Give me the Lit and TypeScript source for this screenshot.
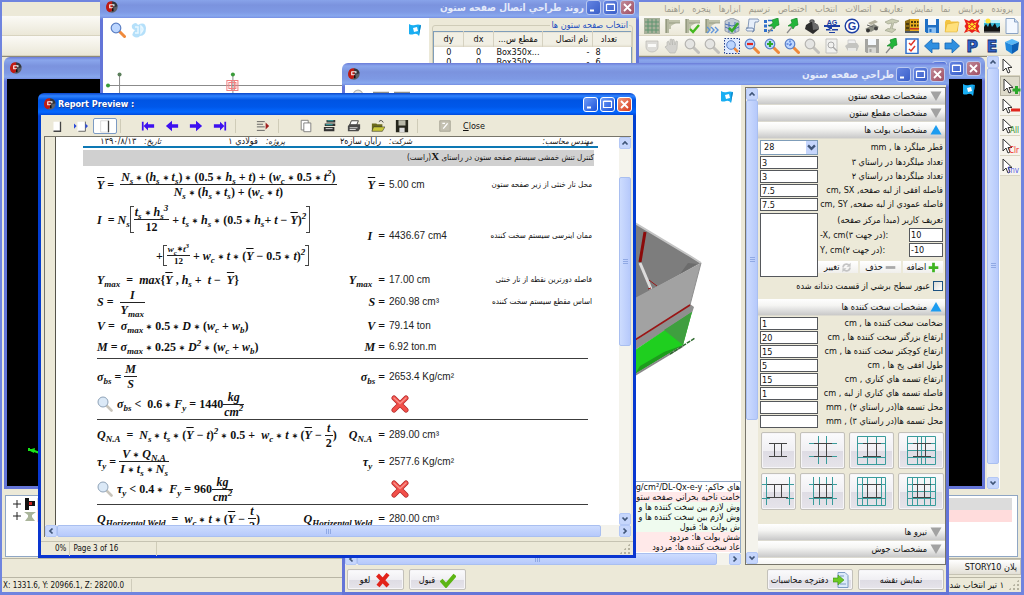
import { LitElement, html, svg, css, nothing } from "lit";
import { customElement, property } from "lit/decorators.js";
import { classMap } from "lit/directives/class-map.js";

/* ---------- icons ---------- */

const icon = (body: unknown, cls = "", box = "0 0 16 16") =>
  html`<svg class="icon ${cls}" viewBox=${box} aria-hidden="true">${body}</svg>`;

const lens = (glass: string, rim: string, handle: string, mark: unknown = nothing) =>
  icon(svg`<path d="M9.500 9.500 14.500 14.500" stroke=${handle} stroke-width="3" stroke-linecap="round"/>
    <circle cx="6" cy="6" r="4.800" fill=${glass} stroke=${rim} stroke-width="1.200"/>${mark}`);

const blueLens = (mark: unknown = nothing) => lens("#bcd6ff", "#5b7fc4", "#f08a3c", mark);
const greyLens = () => lens("#e4e4e2", "#b5b4b0", "#c2c1bd");

const beam = (mark: unknown) =>
  icon(svg`<path d="M1 1h4v14H1z" fill="#b4b8a0"/><path d="M5 2h11v3H5zM5 5h7L7 8v3H5z" fill="#bfc2ab"/>
    <path d="M2.500 1v14M5 5h11" stroke="#888c74" stroke-width=".7"/>${mark}`);

const pin = (x = 0) => svg`<g transform="translate(${x} 0)"><path d="M7 2 13 0 14 7 11 8 9 11 7 8 4 8 8 5z" fill="#23b53a" stroke="#0d7d20" stroke-width=".6"/><path d="M8 9 3 15" stroke="#888" stroke-width="1.200"/></g>`;

const floppy = (a: string, b: string) =>
  icon(svg`<path d="M1 1h14v14H2.500L1 13.500z" fill=${a}/><path d="M4 1h8v6H4z" fill="#f4f8fc"/><path d="M4 9.500h8V15H4z" fill=${b}/><path d="M5.500 11h2v3h-2z" fill=${a}/>`);

const arrow = (flip: boolean) =>
  icon(svg`<path transform=${flip ? "matrix(-1 0 0 1 16 0)" : ""} d="M1 5h7V1l7.500 7L8 15v-4H1z" fill="#2f8fe0" stroke="#1566b4" stroke-width=".8"/>`);

const letter = (t: string) =>
  icon(svg`<text x="8" y="14" text-anchor="middle" font-family="DejaVu Sans" font-weight="bold" font-size="16" fill="#2f62c8" stroke="#142f6e" stroke-width=".8">${t}</text>`);

const topTools: [string, unknown][] = [
  ["جدید", icon(svg`<path d="M2 .5h8.500L14 4v11.500H2z" fill="#f3f8ff" stroke="#8aa3c4"/><path d="M10.500.5V4H14" fill="#cfdff5" stroke="#8aa3c4"/>`)],
  ["مدل", icon(svg`<path d="M0 2h16v13H0z" fill="#37b7d8"/><path d="M0 2h16v3H0z" fill="#bff0f7"/><path d="M0 15V9l2-3 2 3 2-5 2 5 3-4 2 5 3-2v7z" fill="#111"/><circle cx="4" cy="3" r="2.500" fill="#ffe23a"/><path d="M0 13.500h16V15H0z" fill="#7c7c7c"/>`)],
  ["شبکه", icon(svg`<path d="M0 1 5 3 8 1l3 2 5-2-2 5 1.500 2L14 11l2 4-5-2-3 2-3-2-5 2 2-4-1.500-3L2 6z" fill="#e9221c"/><path d="M3 4 7 6 8 4l1 2 4-2-2 3 1 1-1 2 2 3-4-2-1 1-1-1-4 2 2-3-1-2 1-1z" fill="#ffe92b"/><path d="M5 6 11 11M11 6 5 11" stroke="#e9221c"/>`)],
  ["باز کردن", icon(svg`<path d="M1 4 2 2h4l1 1.500h7V13H1z" fill="#f3c443"/><path d="M3 6l12-2-2 10H1z" fill="#ffe07a" stroke="#dba92a" stroke-width=".5"/>`)],
  ["ذخیره", floppy("#1f6fc4", "#8dc1f2")],
  ["ساختمان", icon(svg`<path d="M1 3 6 1v14H1z" fill="#8a6b14"/><path d="M6 1h9v14H6z" fill="#e6ad20"/><path d="M7 3h2v2H7zM10 3h2v2h-2zM13 3h1.500v2H13zM7 6.500h2v2H7zM10 6.500h2v2h-2zM13 6.500h1.500v2H13zM2 5h3v2H2zM2 9h3v2H2z" fill="#4b3a10"/><path d="M6 10h9v1.500H6z" fill="#c43222"/><path d="M1 13h14v2H1z" fill="#4d5660"/>`)],
  ["مقطع", icon(svg`<path d="M1 4 8 1l7 2-3 2-2-.5-2 6 4 1-4 3-7-2 3-2 2 .5 2-6-4 1z" fill="#c9ccb4" stroke="#959983" stroke-width=".6"/>`)],
  ["بار", icon(svg`<path d="M1 11 10 6l5 3-8 5z" fill="#8d8e84"/><path d="M4 5 11 2l3 2-7 3z" fill="#b3b09d"/><path d="M3 7 9 9" stroke="#666"/><circle cx="4" cy="12.500" r="2" fill="#333"/><circle cx="12" cy="10.500" r="2" fill="#444"/>`)],
  ["G", icon(svg`<circle cx="8" cy="8" r="6.800" fill="#fff" stroke="#1c3fa4" stroke-width="1.400"/><text x="8" y="12" text-anchor="middle" font-family="Liberation Sans" font-weight="bold" font-size="11" fill="#1c3fa4">G</text>`)],
  ["AG", icon(svg`<text x="8" y="6.500" text-anchor="middle" font-family="Liberation Sans" font-weight="bold" font-size="7" fill="#1c3fa4">AG</text><path d="M0 7h16v2H0zM2 11h12v1.500H2zM5 14h6v1H5zM3 9 8 13 8 9z" fill="#1c3fa4"/>`)],
  ["وزن", icon(svg`<path d="M6 4a2 2 0 0 1 4 0" stroke="#555" stroke-width="1.500"/><path d="M8 3 14 7l1 4-6 5-8-5 1-4z" fill="#2d2d2d"/><path d="M8 3 14 7l1 4-6 1z" fill="#6c6c6c"/>`)],
  ["گره", icon(pin())],
  ["لیست", icon(svg`<path d="M0 2h3v3H0zM0 6.500h3v3H0zM0 11h3v3H0z" fill="#2f6fcb"/><path d="M4 2.500h4M4 7.500h4M4 12.500h5" stroke="#2f6fcb" stroke-width="1.500"/>${pin(1)}`)],
  ["گزارش", icon(svg`<path d="M5 1h9a2 2 0 0 1 0 3h-3l-1 9H3a2 2 0 0 1 0-3h1z" fill="#e6eefa" stroke="#6c84aa" stroke-width=".8"/><path d="M2 10h6a2 2 0 0 1 0 4" fill="none" stroke="#6c84aa"/>`)],
  ["جدول", icon(svg`<path d="M1 3 8 0l7 3v10l-7 3-7-3z" fill="#c3ccd8" stroke="#6f7b8c" stroke-width=".6"/><path d="M1 6l7 2 7-2M1 9l7 3 7-3M5 4v10M11 4v10" stroke="#4b6fb4" fill="none"/><path d="M5 10 8 13 14 5" fill="none" stroke="#36a82a" stroke-width="2.500"/>`)],
  ["ادامه", beam(svg`<path d="M3 9l3 3-3 3M7 9l3 3-3 3M11 9l3 3-3 3" fill="none" stroke="#5f95dc" stroke-width="1.400"/>`)],
  ["کنترل", beam(svg`<path d="M6 11 9 14 15 7" fill="none" stroke="#44b81e" stroke-width="2.400"/>`)],
  ["تیر", beam(nothing)],
  ["شبکه", icon(svg`<path d="M0 0h16v16H0z" fill="#a7b09a"/><path d="M4 1v14M8 1v14M12 1v14M1 4h14M1 8h14M1 12h14" stroke="#5e9470"/>`)],
];

const bottomTools: [string, unknown][] = [
  ["سه بعدی", icon(svg`<path d="M1 4 8 1l7 3-7 3z" fill="#55b6f7"/><path d="M1 4l7 3v9l-6-4z" fill="#2087dc"/><path d="M15 4 8 7v9l6-4z" fill="#0d5fb4"/>`)],
  ["E", letter("E")],
  ["P", letter("P")],
  ["بعدی", arrow(false)],
  ["قبلی", arrow(true)],
  ["بازبینی", icon(svg`<path d="M2 1h12v14.500H2z" fill="#fff" stroke="#2f6fcb" stroke-width="1.500"/><path d="M5 5 7 7 11 2M5 11l2 2 4-5" fill="none" stroke="#e0352b" stroke-width="1.500"/>`)],
  ["گره", icon(pin(-1))],
  ["ذخیره", floppy("#a5a5a1", "#d8d8d4")],
  ["چاپ", icon(svg`<path d="M4 2h7l1 4H4z" fill="#eee" stroke="#bbb" stroke-width=".6"/><path d="M1 8 5 5h8l2 3-2 5H4z" fill="#c4c4c0"/><path d="M4 10h8v3H4z" fill="#e9e9e6"/>`)],
  ["پیش نمایش", icon(svg`<path d="M2 1h11v14H2z" fill="#f1f1ef" stroke="#c2c2be"/><circle cx="7" cy="7" r="3" fill="none" stroke="#aaa"/><path d="M9 9l4 4" stroke="#aaa" stroke-width="1.500"/>`)],
  ["ذره بین", greyLens()],
  ["نمای کامل", blueLens(svg`<path d="M6 2.500v7M2.500 6h7" stroke="#2656c8" stroke-dasharray="2 1.500"/>`)],
  ["بزرگ", blueLens(svg`<path d="M6 3v6M3 6h6" stroke="#2ba82b" stroke-width="2.200"/>`)],
  ["کوچک", blueLens(svg`<path d="M3 6h6" stroke="#e0261d" stroke-width="2.200"/>`)],
  ["پنجره", icon(svg`<path d="M.5.5h15v15H.5z" fill="#dfeaff" stroke="#23408e" stroke-dasharray="1.500 1.500"/><path d="M10 10l4 4" stroke="#f08a3c" stroke-width="2.500"/><circle cx="7" cy="7" r="4.300" fill="#bcd6ff" stroke="#5b7fc4"/>`)],
  ["ذره بین", greyLens()],
  ["ذره بین", greyLens()],
  ["جابجایی", icon(svg`<path d="M3 8V4l1.500-1L6 7V1.500L7.500 1 8.500 7V1.500l1.500 0L11 7l1-4 1.500.5L13 11l-2 4H6L1 9l1-1z" fill="#d3d2ce" stroke="#b2b1ac" stroke-width=".6"/>`)],
  ["دوران", icon(svg`<path d="M2 3h12v6a6 5 0 0 1-12 0z" fill="#dddcd8" stroke="#b9b8b3" stroke-width=".7"/><path d="M4 6h8v3H4z" fill="#fafaf8"/>`)],
];

const logoIcon = () => icon(svg`<circle cx="8" cy="8" r="7.500" fill="#5d6068"/><path d="M8 .5A7.500 7.500 0 0 0 5 15L9 12 9 1z" fill="#c01a12"/><path d="M8 .5A7.500 7.500 0 0 1 15.400 7L9 9z" fill="#33363c"/><path d="M4.500 5h6v2M5 5v4h4" stroke="#f2f2f2" stroke-width="1.600"/><path d="M8 9.500h2v4H8z" fill="#111"/>`, "s12");

const viewCube = () => icon(svg`<path d="M1 1Q4 3 7 2t6 0L11 13Q9 10 6 11t-5 0z" fill="#19aef2"/><path d="M5 5l4-1 1 4-4 1z" fill="#fff"/><path d="M11.500 3l1.500-1-2 11z" fill="#0b7fc0"/>`, "s14", "0 0 14 14");

const zoomSmall = () => icon(svg`<path d="M9.500 9.500 14.500 14.500" stroke="#c8c4bb" stroke-width="2.600" stroke-linecap="round"/><circle cx="6" cy="6" r="5" fill="#dbe9f7" stroke="#8fa3b8"/>`);

const redCross = () => icon(svg`<path d="M3 3 15 15M15 3 3 15" stroke="#b32a2a" stroke-width="5" stroke-linecap="round"/><path d="M3 3 15 15M15 3 3 15" stroke="#f2504a" stroke-width="3.600" stroke-linecap="round"/><path d="M3 3 9 8.500 15 3" stroke="#f99089" stroke-width="1.400" stroke-linecap="round"/>`, "s18", "0 0 18 18");

const chev = (d: "up" | "down" | "left" | "right") => {
  const p = { up: "M1.500 5.500 4 3l2.500 2.500", down: "M1.500 2.500 4 5l2.500-2.500", left: "M5.500 1.500 3 4l2.500 2.500", right: "M2.500 1.500 5 4 2.500 6.500" }[d];
  return html`<svg class="chev" viewBox="0 0 8 8" aria-hidden="true"><path d=${p} fill="none" stroke="#3f5578" stroke-width="1.700"/></svg>`;
};

/* ---------- formulas ---------- */

/* "_x" and "_{xx}" lower, "^x" and "^{xx}" raise, "~" puts a bar over Y, "*" is the product sign */
const math = (src: string): unknown =>
  [...src.matchAll(/(~)|([_^])(?:\{([^}]*)\}|(.))|([A-Za-zστ]+)|(\*)|([^A-Za-zστ_^~*]+)/g)].map((m) => {
    if (m[1]) return html`<i class="over">Y</i>`;
    if (m[2] === "_") return html`<sub>${m[3] ?? m[4]}</sub>`;
    if (m[2] === "^") return html`<sup>${m[3] ?? m[4]}</sup>`;
    if (m[5]) return html`<i>${m[5]}</i>`;
    return m[6] ? html`<span class="star">∗</span>` : html`<span>${m[7]}</span>`;
  });

const frac = (n: string, d: string, small = false) =>
  html`<span class=${small ? "frac small" : "frac"}><span>${math(n)}</span><span class="den">${math(d)}</span></span>`;

const f = (...parts: unknown[]) =>
  html`<span class="formula">${parts.map((p) => (typeof p === "string" ? html`<span class="run">${math(p)}</span>` : p))}</span>`;

const bracket = (...parts: unknown[]) => html`<span class="bracket">${f(...parts)}</span>`;

/* ---------- window frame ---------- */

@customElement("xp-window")
export class XpWindow extends LitElement {
  @property() heading = "";
  @property({ type: Boolean, reflect: true }) active = false;
  @property({ type: Boolean, reflect: true }) rtl = false;

  static styles = css`
    :host { display: flex; flex-direction: column; box-sizing: border-box; overflow: hidden; padding: 0 3px 3px; border-radius: 6px 6px 0 0;
      background: linear-gradient(#6b7cd9, #8aa6ec 3px, #7b93de 9px, #7e99e4 16px, #88a8ee 20px, #6375d8 24px, #6475d8); }
    :host([active]) { background: linear-gradient(#0a45c8, #2f83ff 3px, #0054e3 7px, #0058ea 14px, #0468ff 19px, #0040d0 23px, #0a35d0); }
    header { flex: none; display: flex; align-items: center; gap: 2px; height: 22px; padding: 0 1px 0 3px; color: #e4eafa;
      font: bold 9px "DejaVu Sans Condensed", "DejaVu Sans", sans-serif; }
    :host([active]) header { color: #fff; }
    h1 { flex: 1; margin: 0; font: inherit; white-space: nowrap; text-shadow: 1px 1px #1b3f99; }
    :host([rtl]) h1 { direction: rtl; font-size: 10px; text-shadow: none; }
    svg { display: block; width: 13px; height: 13px; fill: none; }
    button { box-sizing: border-box; width: 15px; height: 15px; padding: 0; border: 1px solid #b9c8f0; border-radius: 3px; background: linear-gradient(135deg, #6484e2, #3a5fc8); color: #fff; }
    button.close { background: linear-gradient(135deg, #c08a98, #a04e62); }
    :host([active]) button { border-color: #fff; background: linear-gradient(135deg, #6f9cf8, #1c52d8); }
    :host([active]) button.close { background: linear-gradient(135deg, #f29a7c, #d5381a); }
    .body { flex: 1; min-height: 0; display: flex; flex-direction: column; }
    svg.icon { width: 12px; height: 12px; }
  `;

  render() {
    return html`
      <header>
        ${logoIcon()}
        <h1>${this.heading}</h1>
        <button aria-label="Minimize"><svg viewBox="0 0 13 13"><path d="M3 9.500h4" stroke="#fff" stroke-width="2"/></svg></button>
        <button aria-label="Maximize"><svg viewBox="0 0 13 13"><path d="M2.500 3.500h8v6h-8zM2.500 3h8" stroke="#fff" stroke-width="1.200"/></svg></button>
        <button class="close" aria-label="Close window"><svg viewBox="0 0 13 13"><path d="M3 3l7 7M10 3l-7 7" stroke="#fff" stroke-width="1.800"/></svg></button>
      </header>
      <div class="body"><slot></slot></div>`;
  }
}

/* ---------- data ---------- */

const menus = ["پرونده", "ویرایش", "نما", "نمایش", "تعاریف", "اتصالات", "انتخاب", "اختصاص", "ترسیم", "ابزارها", "پنجره", "راهنما"];

const boltFields = [
  ["تعداد میلگردها در راستاي ۳", "3"],
  ["تعداد میلگردها در راستاي ۲", "3"],
  ["فاصله افقی از لبه صفحه, cm, SX", "7.5"],
  ["فاصله عمودي از لبه صفحه, cm, SY", "7.5"],
];

const stiffenerFields = [
  ["ضخامت سخت کننده ها , cm", "1"],
  ["ارتفاع بزرگتر سخت کننده ها , cm", "20"],
  ["ارتفاع کوچکتر سخت کننده ها , cm", "15"],
  ["طول افقی پخ ها , cm", "5"],
  ["ارتفاع تسمه هاي کناري , cm", "15"],
  ["فاصله تسمه هاي کناري از لبه , cm", "1"],
  ["محل تسمه ها(در راستاي ۲) , mm", ""],
  ["محل تسمه ها(در راستاي ۳) , mm", ""],
];

const log: [string, string][] = [
  ["", "هاي حاکم: Kg/cm²/DL-Qx-e-y"],
  ["bad", "خامت ناحیه بحراني صفحه ستون"],
  ["good", "وش لازم بین سخت کننده ها و ص"],
  ["good", "وش لازم بین سخت کننده ها و س"],
  ["good", "ش بولت ها: قبول"],
  ["bad", "شش بولت ها: مردود"],
  ["bad", "عاد سخت کننده ها: مردود"],
];

const patterns: unknown[] = [
  svg`<path d="M8 9.500h18M8 22.500h18M13.500 9v14M20.500 9v14" stroke="#444"/>`,
  svg`<path d="M13.500 2v28M21.500 2v28M4 9.500h28M4 22.500h28" stroke="#3a9c9c"/><path d="M9 9.500h18M9 22.500h18M13.500 9v14M21.500 9v14" stroke="#444"/>`,
  svg`<path d="M3.500 2.500h28v28h-28zM13.500 2v28M22.500 2v28M3 9.500h28M3 23.500h28" stroke="#3a9c9c"/><path d="M9 9.500h18M9 22.500h18M13.500 9v14M22.500 9v14" stroke="#444"/>`,
  svg`<path d="M3.500 2.500h28v28h-28zM13.500 2v28M17.500 2v28M21.500 2v28M3 9.500h28M3 16.500h28M3 23.500h28" stroke="#3a9c9c"/><path d="M9 9.500h18M9 22.500h18M13.500 9v14M21.500 9v14" stroke="#444"/>`,
  svg`<path d="M5.500 2v28M28.500 2v28M1 9.500h8M25 9.500h8M1 23.500h8M25 23.500h8" stroke="#3a9c9c"/><path d="M6 9.500h21M6 22.500h21M13.500 9v14M20.500 9v14" stroke="#444"/>`,
  svg`<path d="M8.500 2v28M14.500 2v28M21.500 2v28M27.500 2v28M4 9.500h28M4 23.500h28" stroke="#3a9c9c"/><path d="M9 9.500h18M9 22.500h18M14.500 9v14M21.500 9v14" stroke="#444"/>`,
  svg`<path d="M3.500 2.500h28v28h-28zM8.500 2v28M13.500 2v28M22.500 2v28M27.500 2v28M3 9.500h28M3 23.500h28" stroke="#3a9c9c"/><path d="M9 9.500h18M9 22.500h18M13.500 9v14M22.500 9v14" stroke="#444"/>`,
  svg`<path d="M3.500 2.500h28v28h-28zM8.500 2v28M13.500 2v28M20.500 2v28M26.500 2v28M3 9.500h28M3 16.500h28M3 23.500h28" stroke="#3a9c9c"/><path d="M9 9.500h18M9 22.500h18M13.500 9v14M20.500 9v14" stroke="#444"/>`,
];

type Row = { cls: string; formula: unknown; eq?: string; value?: unknown; note?: string; lens?: boolean; rule?: boolean };

const rows: Row[] = [
  { cls: "r-first", formula: f("~ =  ", frac("N_s * (h_s * t_s) * (0.5 * h_s + t) + (w_c * 0.5 * t^2)", "N_s * (h_s * t_s) + (w_c * t)")), eq: "~ =", value: "5.00 cm", note: "محل تار خنثی از زیر صفحه ستون" },
  {
    cls: "r-double",
    formula: html`<span class="stack">${f("I  = N_s", bracket(frac("t_s * h_s^3", "12"), " + t_s * h_s * (0.5 * h_s+ t − ~)^2"))}
      <span class="second">${f("+", bracket(frac("w_c*t^3", "12", true), " + w_c * t * (~ − 0.5 * t)^2"))}</span></span>`,
    eq: "I  =", value: "4436.67 cm4", note: "ممان اینرسی سیستم سخت کننده",
  },
  { cls: "r-line", formula: f("Y_{max}  =  max{~ , h_s +  t −  ~}"), eq: "Y_{max}  =", value: "17.00 cm", note: "فاصله دورترین نقطه از تار خنثی" },
  { cls: "r-mid", formula: f("S =  ", frac(" I ", "Y_{max}")), eq: "S =", value: "260.98 cm³", note: "اساس مقطع سیستم سخت کننده" },
  { cls: "r-mid", formula: f("V =  σ_{max} * 0.5 * D * (w_c + w_b)"), eq: "V =", value: "79.14 ton" },
  { cls: "r-line", formula: f("M = σ_{max} * 0.25 * D^2 * (w_c + w_b)"), eq: "M =", value: "6.92 ton.m", rule: true },
  { cls: "r-tall", formula: f("σ_{bs} = ", frac("M", "S")), eq: "σ_{bs} =", value: "2653.4 Kg/cm²" },
  { cls: "r-tall", formula: f("σ_{bs} <  0.6 * F_y = 1440", frac("kg", "cm^2")), lens: true, value: redCross(), rule: true },
  { cls: "r-mid", formula: f("Q_{N.A}  =  N_s * t_s * (~ − t)^2 * 0.5 +  w_c * t * (~ − ", frac("t", "2"), ")"), eq: "Q_{N.A}  =", value: "289.00 cm³" },
  { cls: "r-tall", formula: f("τ_y = ", frac("V * Q_{N.A}", "I * t_s * N_s")), eq: "τ_y  =", value: "2577.6 Kg/cm²" },
  { cls: "r-tall", formula: f("τ_y < 0.4 *  F_y = 960", frac("kg", "cm^2")), lens: true, value: redCross(), rule: true },
  { cls: "r-line", formula: f("Q_{Horizental Weld}  =  w_c * t * (~ − ", frac("t", "2"), ")"), eq: "Q_{Horizental Weld}  =", value: "280.00 cm³" },
];

/* ---------- page ---------- */

@customElement("app-root")
export class AppRoot extends LitElement {
  static styles = css`
    :host { display: block; position: relative; height: 100vh; overflow: hidden; color: #111; background: #ece9d8;
      font: 9px/14px "DejaVu Sans Condensed", "DejaVu Sans", sans-serif; }
    * { box-sizing: border-box; }
    button, input, select, textarea { font: inherit; color: inherit; }
    button { padding: 0; border: 0; background: none; }
    .icon { display: block; flex: none; width: 16px; height: 16px; fill: none; }
    .s12 { width: 12px; height: 12px; }
    .s14 { width: 14px; height: 14px; }
    .s18 { width: 18px; height: 18px; margin-left: 2px; }
    .rtl { direction: rtl; }

    /* main frame */
    .frame { height: 100%; display: flex; flex-direction: column; border: 3px solid #6f84df; border-width: 2px 3px 3px 2px; }
    .menu { display: flex; direction: rtl; gap: 8px; height: 14px; padding: 0 8px; color: #9c998c; }
    .menu a { color: inherit; text-decoration: none; white-space: nowrap; }
    .tools { display: flex; direction: rtl; gap: 4px; height: 20px; padding: 2px 1px; overflow: hidden; border-bottom: 1px solid #d8d4c0; background: linear-gradient(#fbfaf6, #ebe8d8); }
    .tools button { flex: none; }
    .work { flex: 1; min-height: 0; display: flex; }
    .mdi { flex: 1; position: relative; border-top: 1px solid #8c8a7c; }
    .model { position: absolute; inset: 0 2px 0 2px; }
    .black { flex: 1; position: relative; background: #000; }
    .black .s14 { position: absolute; right: 6px; top: 4px; }
    .axis { position: absolute; left: 20px; bottom: 26px; width: 20px; height: 14px; }
    .side { flex: none; width: 22px; display: flex; flex-direction: column; border-left: 1px solid #fff; }
    .side button { height: 20px; width: 20px; border-bottom: 1px solid #d8d4c0; background: #f6f4ec; }
    .side button.on { background: #dedbcb; border: 1px solid #b7b4a3; }
    .side .icon { width: 20px; height: 18px; }
    .tree { flex: none; height: 62px; margin: 6px 3px 0; border: 1px solid #8fa6c4; background: #fff; padding: 2px 5px; }
    .tree div { display: flex; align-items: center; gap: 1px; height: 12px; }
    .tree .bar1, .tree .bar2 { flex: 1; height: 12px; background: #dcdcdc; }
    .tree .bar2 { background: #ffdcdc; }
    .plan { flex: none; display: flex; justify-content: flex-end; height: 20px; margin-top: 1px; border: solid #b9b6a5; border-width: 1px 0; }
    .plan button { height: 16px; padding: 0 3px; border: 1px solid #c6c3b4; background: linear-gradient(#fff, #e2dfd6); width: 84px; text-align: right; }
    .status { flex: none; display: flex; align-items: center; justify-content: space-between; height: 14px; padding: 0 1px; line-height: 13px; font-size: 8px; white-space: nowrap; }
    .status span { padding-right: 7px; border-right: 1px solid #cfccbb; }
    .status .end { display: flex; gap: 4px; padding: 0; border: 0; font-size: 9px; }
    .status .grip { margin: 0; }

    /* scrollbars */
    .scroll { flex: none; display: flex; background: #f4f3ec; }
    .scroll.v { flex-direction: column; width: 12px; }
    .scroll.h { height: 12px; }
    .scroll button { flex: none; display: grid; place-items: center; width: 12px; height: 12px; border: 1px solid #b4c8f6; border-radius: 2px; background: #c6d6fc; }
    .chev { width: 8px; height: 8px; }
    .thumb { display: grid; place-items: center; border: 1px solid #a9bff0; border-radius: 2px; background: linear-gradient(90deg, #cddcfe, #b6c9fb); }
    .scroll.h .thumb { background: linear-gradient(#cddcfe, #b6c9fb); }
    .thumb::after { content: ""; width: 5px; height: 5px; background: repeating-linear-gradient(#90a9e4 0 1px, transparent 1px 2px); }
    .scroll.h .thumb::after { background: repeating-linear-gradient(90deg, #90a9e4 0 1px, transparent 1px 2px); }
    .g1 { flex: 1; } .g2 { flex: 2; } .g5 { flex: 5; } .g12 { flex: 12; } .g30 { flex: 30; }

    /* free windows */
    .w-route { position: absolute; left: 100px; top: -4px; right: 385px; height: 500px; }
    .w-design { position: absolute; left: 342px; top: 63px; right: 75px; bottom: 0; }
    .w-report { position: absolute; left: 38px; top: 93px; right: 388px; bottom: 37px; }

    /* route window */
    .split { flex: 1; min-height: 0; display: flex; background: #fff; }
    .canvas { flex: 1; position: relative; overflow: hidden; background: #fff; }
    .bar-top { display: flex; align-items: center; gap: 5px; padding: 4px 7px; }
    .bar-top .s14 { margin-left: auto; }
    .plot { display: block; width: 100%; height: 60px; margin-top: 25px; fill: none; }
    .pane { flex: none; width: 207px; padding: 1px 3px; background: #ece9d8; }
    fieldset { min-width: 0; height: 300px; margin: 0; padding: 0; border: 1px solid #cfccb8; border-radius: 3px; direction: rtl; }
    legend { margin: 0 3px; padding: 0 1px; color: #2450c0; line-height: 12px; }
    table { direction: ltr; width: 100%; border-collapse: collapse; table-layout: fixed; background: #fff; border: 1px solid #7f9db9; line-height: 10px; white-space: nowrap; }
    th { height: 15px; padding: 0 4px; font-weight: normal; background: linear-gradient(#f1efe4 80%, #d8d3bf); border-right: 1px solid #d5d1c0; }
    td { height: 10px; padding: 0 3px; text-align: center; }
    td:nth-child(4), th:nth-child(4) { text-align: right; }
    td:nth-child(5) { text-align: left; }
    th:nth-child(5) { padding-right: 10px; }

    /* design window */
    .design { flex: 1; min-height: 0; display: flex; flex-direction: column; background: #ece9d8; }
    .design .split { background: #ece9d8; gap: 4px; }
    .left { flex: 1; min-width: 0; display: flex; flex-direction: column; }
    .solid { position: absolute; left: 290px; top: 135px; width: 75px; height: 160px; fill: none; }
    .log { flex: none; margin: 0; padding: 0 0 1px; list-style: none; direction: rtl; border: 1px solid #8fa6c4; border-bottom: 0; background: #fff; line-height: 10px; white-space: nowrap; overflow: hidden; }
    .log li { height: 10px; }
    .log .bad { background: #ffe9e9; }
    .log .good { background: #effbef; }
    .props { flex: none; width: 201px; display: flex; margin-top: 2px; border: 1px solid #77756a; overflow: hidden; }
    .form { flex: 1; min-width: 0; direction: rtl; overflow: hidden; }
    .sec { display: flex; align-items: center; gap: 3px; width: 100%; height: 17px; padding: 0 3px; border-bottom: 1px solid #dcdad0; background: linear-gradient(#fff, #f5f5f3 40%, #c9c9c9); line-height: 14px; }
    .sec svg { width: 12px; height: 12px; fill: #a2a2a2; }
    .sec .open { fill: #1c9cf0; }
    .fields { display: grid; grid-template-columns: 1fr 58px; row-gap: 1px; padding: 1px 2px 2px; align-items: center; }
    .fields label { white-space: nowrap; line-height: 13px; }
    .form input[type="text"], .form select, .form textarea { direction: ltr; width: 100%; height: 13px; margin: 0; padding: 0 1px; border: 1px solid #55585c; border-radius: 0; background: #fff; line-height: 11px; resize: none; display: block; }
    .form .pick { position: relative; }
    .form .pick select { height: 15px; border-color: #7f9db9; appearance: none; padding-left: 3px; line-height: 13px; }
    .pick .chev { position: absolute; right: 1px; top: 1px; width: 11px; height: 13px; background: #c6d6fc; pointer-events: none; }
    .user { display: grid; grid-template-columns: 1fr 58px; padding: 0 2px; }
    .user textarea { height: 64px; }
    .custom { display: grid; gap: 1px; align-content: start; }
    .axisrow { display: flex; justify-content: space-between; align-items: center; padding-left: 2px; }
    .axisrow label { direction: ltr; white-space: nowrap; }
    .form .axisrow input { width: 34px; height: 14px; }
    .acts { display: flex; gap: 2px; padding-top: 3px; }
    .acts button { flex: 1; display: flex; align-items: center; justify-content: center; gap: 2px; height: 12px; background: linear-gradient(#fff, #f0efec); line-height: 12px; white-space: nowrap; }
    .acts .icon { width: 11px; height: 11px; }
    .check { display: flex; align-items: center; gap: 3px; padding: 2px 2px 6px; white-space: nowrap; }
    .check input { width: 10px; height: 10px; margin: 0; appearance: none; border: 1px solid #1c5180; background: linear-gradient(135deg, #dcdcd7, #fff); }
    .patterns { direction: ltr; display: grid; grid-template-columns: 35px 45px 45px 46px; gap: 4px; padding: 2px 3px 14px; }
    .patterns button, .push { border: 1px solid #c3c1ba; border-radius: 2px; background: linear-gradient(#fbfbfc, #f0eff3 50%, #dedce4 51%, #e6e4ea); box-shadow: inset 0 0 0 1px #f6f5f8; }
    .patterns button { display: grid; place-items: center; height: 37px; }
    .patterns svg { width: 35px; height: 33px; margin: 0 -2px; fill: none; }
    .foot { flex: none; display: flex; gap: 5px; padding: 4px 2px 2px; }
    .push { display: flex; align-items: center; justify-content: center; gap: 5px; width: 57px; height: 21px; white-space: nowrap; }
    .push.wide { width: 86px; }
    .foot .first { margin-left: auto; }

    /* report window */
    .report { flex: 1; min-height: 0; display: flex; flex-direction: column; background: #ece9d8; }
    .rtools { flex: none; display: flex; align-items: center; height: 21px; padding: 0 4px; }
    .rtools button { width: 24px; height: 16px; display: grid; place-items: center; }
    .rtools .icon { width: 14px; height: 14px; }
    .rtools .on { border: 1px solid #7c9bc4; border-radius: 2px; background: #fff; }
    .rtools .sep { width: 1px; height: 14px; margin: 0 15px 0 3px; background: #cfccb8; }
    .rtools .text { display: block; width: auto; padding: 0 6px; line-height: 14px; }
    .view { flex: 1; min-height: 0; display: flex; margin: 0 2px 0 3px; border: 1px solid #77756a; border-width: 1px 0 0 1px; }
    .ruler { flex: none; width: 11px; border-right: 1px solid #55534a; background: #ece9d8; }
    .col { flex: 1; min-width: 0; display: flex; flex-direction: column; }
    .page { flex: 1; min-height: 0; overflow: hidden; padding: 0 21px 0 27px; background: #fff; }
    .phead { display: grid; grid-template-columns: 181fr 127fr 124fr 70fr; direction: rtl; height: 11px; padding: 0 5px 0 8px; line-height: 8px; white-space: nowrap; overflow: hidden; border-bottom: 2px solid #0d78b4; }
    .phead em { padding-left: 8px; font-size: 8px; }
    .band { direction: rtl; height: 16px; margin: 2px 4px 0 0; background: #d0d0d0; font-size: 8px; line-height: 15px; }
    .band b { font: bold 11px/12px "Liberation Serif", serif; }
    .row { display: grid; grid-template-columns: 230px 58px auto 1fr; grid-template-rows: 100%; align-items: center; padding: 0 6px 0 14px; }
    .row.rule { position: relative; padding-bottom: 3px; margin-bottom: 3px; }
    .row.rule::after { content: ""; position: absolute; left: 14px; right: 10px; bottom: 0; height: 1px; background: #3c3c3c; }
    .cell { display: flex; align-items: center; gap: 4px; }
    .eq { justify-self: end; width: 0; display: flex; justify-content: flex-end; }
    .val { padding-left: 4px; font: 10px/14px "Liberation Sans", sans-serif; color: #222; white-space: nowrap; }
    .note { direction: rtl; white-space: nowrap; text-align: right; font-size: 8px; }
    .r-line { height: 21px; } .r-mid { height: 24px; } .r-tall { height: 29px; } .r-first { height: 37px; } .r-double { height: 66px; }
    .formula { display: inline-flex; align-items: center; white-space: pre; font: bold 12px/12px "Liberation Serif", serif; color: #111; }
    .formula sub, .formula sup { font-size: 9px; line-height: 0; font-style: italic; }
    .formula .star { font-size: 7px; line-height: 0; vertical-align: 1px; }
    .over { text-decoration: overline; }
    .frac { display: inline-flex; flex-direction: column; align-items: center; }
    .frac > span { padding: 0 1px 1px; }
    .frac .den { align-self: stretch; text-align: center; border-top: 1px solid #222; padding: 1px 1px 0; }
    .formula .small { font-size: 9px; line-height: 9px; }
    .formula .small sub, .formula .small sup { font-size: 7px; }
    .bracket { display: inline-flex; padding: 0 3px; background: linear-gradient(#444, #444) 0 0 / 3px 1px, linear-gradient(#444, #444) 0 100% / 3px 1px, linear-gradient(#444, #444) 100% 0 / 3px 1px, linear-gradient(#444, #444) 100% 100% / 3px 1px; background-repeat: no-repeat; border: solid #444; border-width: 0 1px; }
    .stack { display: flex; flex-direction: column; gap: 12px; }
    .second { padding-left: 59px; }
    .rstatus { flex: none; display: flex; align-items: center; height: 14px; margin-top: 4px; padding: 0 2px 0 14px; border-top: 1px solid #c6c3b2; font-size: 8px; }
    .rstatus span { padding: 0 3px 0 0; margin-right: 3px; border-right: 1px solid #cfccb8; }
    .rstatus .p { width: 84px; }
    .grip { width: 12px; height: 12px; margin-left: auto; background: radial-gradient(#b5b2a0 1px, transparent 1px) 0 0 / 4px 4px; clip-path: polygon(100% 0, 100% 100%, 0 100%); }
  `;

  private scroll(dir: "v" | "h", before: string, thumb: string, after: string) {
    const v = dir === "v";
    return html`<div class=${classMap({ scroll: true, [dir]: true })}>
      <button aria-label="Scroll back">${chev(v ? "up" : "left")}</button>
      <div class=${before}></div><div class="thumb ${thumb}"></div><div class=${after}></div>
      <button aria-label="Scroll forward">${chev(v ? "down" : "right")}</button>
    </div>`;
  }

  private mainFrame() {
    const cursor = (mark: unknown) => icon(svg`<path d="M3 2v12l3-3 2 5 2-1-2-4.500h4z" fill="#fff" stroke="#333"/>${mark}`, "", "0 0 20 18");
    const word = (t: string, c: string) => svg`<text x="19" y="16" text-anchor="end" font-family="DejaVu Sans Condensed" font-size="8" fill=${c}>${t}</text>`;
    return html`<main class="frame">
      <nav class="menu">${menus.map((m) => html`<a href="#">${m}</a>`)}</nav>
      <div class="tools">${topTools.map(([l, i]) => html`<button aria-label=${l}>${i}</button>`)}</div>
      <div class="tools">${bottomTools.map(([l, i]) => html`<button aria-label=${l}>${i}</button>`)}</div>
      <div class="work">
        <div class="mdi">
          <xp-window class="model" rtl><div class="black">${viewCube()}
            <svg class="axis" viewBox="0 0 20 14"><path d="M2 3 18 9M2 2v3" stroke="#19e419" stroke-width="2"/><path d="M1 4 8 2 7 7z" fill="#19e419"/></svg>
          </div></xp-window>
        </div>
        ${this.scroll("v", "", "g30", "g1")}
        <div class="side">
          <button aria-label="Select">${cursor(nothing)}</button>
          <button aria-label="Add" class="on">${cursor(svg`<path d="M15.500 9v8M11.500 13h8" stroke="#2ba82b" stroke-width="3"/>`)}</button>
          <button aria-label="Remove">${cursor(svg`<path d="M11 13h9" stroke="#e0261d" stroke-width="3"/>`)}</button>
          <button aria-label="All">${cursor(word("All", "#2b8f2b"))}</button>
          <button aria-label="Clear">${cursor(word("Clr", "#f02020"))}</button>
          <button aria-label="Invert">${cursor(word("Inv", "#5560e8"))}</button>
        </div>
      </div>
      <div class="tree">
        <div><svg class="icon s12" viewBox="0 0 12 12"><path d="M6 2v8M2 6h8" stroke="#222"/></svg><svg class="icon s12" viewBox="0 0 12 12"><path d="M1 0h4v3h6v5H5v4H1z" fill="#111"/><path d="M5 4h3v3H5z" fill="#d02020"/></svg><span class="bar1"></span></div>
        <div><svg class="icon s12" viewBox="0 0 12 12"><path d="M6 2v8M2 6h8" stroke="#222"/></svg><svg class="icon s12" viewBox="0 0 12 12"><path d="M0 2h12L8 5v2l3 4H1l3-4V5z" fill="#a9b49a"/></svg><span class="bar2"></span></div>
      </div>
      <div class="plan"><button class="rtl">پلان STORY10</button></div>
      <div class="status"><span>X: 1331.6, Y: 20966.1, Z: 28200.0</span><span class="end rtl"><i class="grip"></i>۱ تیر انتخاب شده</span></div>
    </main>`;
  }

  private routeWindow() {
    return html`<xp-window class="w-route" rtl heading="روند طراحي اتصال صفحه ستون">
      <div class="split">
        <div class="canvas">
          <div class="bar-top">${blueLens()}
            ${icon(svg`<path d="M1 3q4-4 6 0 7-4 8 3 0 8-6 8-3 3-7 0Q0 12 4 8 0 7 1 3z" fill="#b5e0fa"/><path d="M4 5h3v6H4M10 4q4 3 0 7z" stroke="#e9f7ff" stroke-width="1.500"/>`)}
            ${viewCube()}</div>
          <svg class="plot" viewBox="0 0 325 60" preserveAspectRatio="xMinYMin slice">
            <path d="M5 18.500h320M16.500 8v52M129.500 8v52" stroke="#8b8b8b"/>
            <circle cx="5" cy="18.500" r="2" fill="#3a9c3a"/><circle cx="16.500" cy="7.500" r="2" fill="#5b7f5b"/><circle cx="129.500" cy="7.500" r="2" fill="#3a9c3a"/>
            <path d="M123.500 13.500h11v10h-11zM125.500 15.500h7v6h-7zM128 14v9M131 14v9" stroke="#f08080"/>
          </svg>
        </div>
        <div class="pane">
          <fieldset><legend>انتخاب صفحه ستون ها</legend>
            <table>
              <colgroup><col width="30"><col width="30"><col width="49"><col width="50"><col></colgroup>
              <thead><tr><th>dy</th><th>dx</th><th class="rtl">مقطع س...</th><th>نام اتصال</th><th>تعداد</th></tr></thead>
              <tbody>
                <tr><td>0</td><td>0</td><td>Box350x...</td><td>-</td><td>8</td></tr>
                <tr><td>0</td><td>0</td><td>Box350x...</td><td>-</td><td>6</td></tr>
              </tbody>
            </table>
          </fieldset>
        </div>
      </div>
    </xp-window>`;
  }

  private section(title: string, open = false) {
    return html`<button class="sec"><svg class=${open ? "open" : ""} viewBox="0 0 12 12"><path d=${open ? "M6 1 11.500 10.500H.5z" : "M.5 1.500h11L6 11z"}/></svg>${title}</button>`;
  }

  private field(id: string, [label, value]: string[]) {
    return html`<label for=${id}>${label}</label><input type="text" id=${id} .value=${value}>`;
  }

  private designWindow() {
    const framed = () => icon(svg`<path d="M0 3.500h16v12H0z" stroke="#8d8d88" stroke-width="1.500"/>`);
    return html`<xp-window class="w-design" rtl heading="طراحي صفحه ستون">
      <div class="design">
        <div class="split">
          <div class="left">
            <div class="canvas">
              <div class="bar-top">${greyLens()}${framed()}${framed()}${viewCube()}</div>
              <svg class="solid" viewBox="635 220 75 160">
                <path d="M635 223 701 263 635 299z" fill="#7d7d7d"/>
                <path d="M635 223 690 256 701 263" stroke="#c4c4c4" stroke-width="2"/>
                <path d="M688 263 697 264 680 274z" fill="#6b6b6b"/>
                <path d="M645 232 640 262" stroke="#8b0a0a" stroke-width="3"/>
                <path d="M640 263 651 289" stroke="#dcdcdc" stroke-width="3"/>
                <path d="M649 280 657 286M648 289l3-1" stroke="#9a1515"/>
                <path d="M635 298 701 263 690 305 635 341z" fill="#a2a2a2"/>
                <path d="M701 263 690 305" stroke="#8f8f8f"/>
                <path d="M635 341 690 304 694 307 692 313 635 350z" fill="#8f8f8f"/>
                <path d="M635 340 690 305" stroke="#9a1515" stroke-width="1.500"/>
                <path d="M635 350 692 312 683 345 635 374z" fill="#1fcf1f"/>
                <path d="M664 330 692 312 683 345z" fill="#3f9f3f"/>
                <path d="M635 374 640 366 664 352 683 345z" fill="#1d9d1d"/>
                <path d="M635 375 683 346" stroke="#8a8a8a" stroke-width="2"/>
                <path d="M670 354 695 338" stroke="#2f6a2f" stroke-width="1.500" stroke-dasharray="4 1"/>
              </svg>
            </div>
            <ul class="log">${log.map(([c, t]) => html`<li class=${c}>${t}</li>`)}</ul>
            ${this.scroll("h", "", "g30", "g1")}
          </div>
          <div class="props">
            ${this.scroll("v", "", "g12", "g5")}
            <div class="form">
              ${this.section("مشخصات صفحه ستون")}
              ${this.section("مشخصات مقطع ستون")}
              ${this.section("مشخصات بولت ها", true)}
              <div class="fields">
                <label for="dia">قطر میلگرد ها , mm</label>
                <span class="pick"><select id="dia"><option>28</option></select>${chev("down")}</span>
                ${boltFields.map((x, i) => this.field("bolt" + i, x))}
              </div>
              <div class="user">
                <div class="custom">
                  <label for="pts">تعریف کاربر (مبدأ مرکز صفحه)</label>
                  <div class="axisrow"><input type="text" id="px" .value=${"10"}><label for="px">-X, cm(در جهت ۳):</label></div>
                  <div class="axisrow"><input type="text" id="py" .value=${"-10"}><label for="py">Y, cm(در جهت ۲):</label></div>
                  <div class="acts">
                    <button>${icon(svg`<path d="M8 1v14M1 8h14" stroke="#3fb41f" stroke-width="4"/>`)}اضافه</button>
                    <button>${icon(svg`<path d="M1 6h14v4H1z" fill="#a9a9a9"/>`)}حذف</button>
                    <button>${icon(svg`<path d="M3 8a5 5 0 0 1 9-3M13 8a5 5 0 0 1-9 3" stroke="#c4c4c4" stroke-width="2.500"/><path d="M14 1v6H8zM2 15V9h6z" fill="#c4c4c4"/>`)}تغییر</button>
                  </div>
                </div>
                <textarea id="pts"></textarea>
              </div>
              <label class="check"><input type="checkbox">عبور سطح برشي از قسمت دندانه شده</label>
              ${this.section("مشخصات سخت کننده ها", true)}
              <div class="fields">${stiffenerFields.map((x, i) => this.field("stiff" + i, x))}</div>
              <div class="patterns">${patterns.map((p, i) => html`<button aria-label="Pattern ${i + 1}"><svg viewBox="0 0 35 33">${p}</svg></button>`)}</div>
              ${this.section("نیرو ها")}
              ${this.section("مشخصات جوش")}
              <div class="sec"></div>
            </div>
          </div>
        </div>
        <div class="foot">
          <button class="push">لغو ${icon(svg`<path d="M2.500 3 13 14M13 2 3 14" stroke="#e2231a" stroke-width="4"/>`)}</button>
          <button class="push">قبول ${icon(svg`<path d="M1 8 6 13.500 15 3" stroke="#5cb514" stroke-width="4"/>`)}</button>
          <button class="push wide first">دفترچه محاسبات ${icon(svg`<path d="M5 .5h7l3 3v12H5z" fill="#dceafa" stroke="#7d9cc4"/><path d="M7 4h4M7 12h6" stroke="#7d9cc4"/><path d="M0 6h5V3l6 5-6 5v-3H0z" fill="#6cc924" stroke="#3d9210" stroke-width=".6"/>`)}</button>
          <button class="push wide">نمایش نقشه</button>
        </div>
      </div>
    </xp-window>`;
  }

  private reportTools() {
    const nav = (d: string) => icon(svg`<path d=${d} fill="#3d10f0"/>`);
    const btn = (label: string, body: unknown, cls = "") => html`<button class=${cls} aria-label=${label}>${body}</button>`;
    return html`<div class="rtools">
      ${btn("Whole page", icon(svg`<path d="M4 3h8v11H4z" fill="#fff"/><path d="M12 3v11H4" stroke="#444" stroke-width="1.500"/>`))}
      ${btn("Page width", icon(svg`<path d="M4 3h9v11H4z" fill="#fff"/><path d="M13 3v11H5" stroke="#555"/><path d="M0 5l3 3-3 3zM13 5v6l3-3z" fill="#2a49d8"/>`))}
      ${btn("Actual size", icon(svg`<path d="M3 2h9v13H3z" fill="#fff" stroke="#bbb" stroke-width=".6"/><path d="M12 2v13" stroke="#444" stroke-width="1.500"/>`), "on")}
      <span class="sep"></span>
      ${btn("First page", nav("M1 3h2v10H1zM3 8 8 3v3h7v4H8v3z"))}
      ${btn("Previous page", nav("M1 8 8 2v4h7v4H8v4z"))}
      ${btn("Next page", nav("M15 8 8 2v4H1v4h7v4z"))}
      ${btn("Last page", nav("M15 3h-2v10h2zM13 8 8 3v3H1v4h7v3z"))}
      <span class="sep"></span>
      ${btn("Go to page", icon(svg`<path d="M1 3h9M1 6h7M1 9h9M1 13h9" stroke="#555"/><path d="M11 4v8l4-4z" fill="#a02020"/>`))}
      <span class="sep"></span>
      ${btn("Copy", icon(svg`<path d="M2.500 1.500h8v11h-8z" fill="#fff" stroke="#777"/><path d="M5.500 4.500h8v10h-8z" fill="#fff" stroke="#777"/>`))}
      ${btn("Print all", icon(svg`<path d="M4 1h10v3H4zM2 5h12v3H2zM1 9h12v5H1z" fill="#333"/><path d="M5 2h7M3 6.500h8" stroke="#3ac0c0"/><path d="M3 11h8" stroke="#eee"/>`))}
      ${btn("Print", icon(svg`<path d="M5 2h8l-2 5H3z" fill="#fff" stroke="#333"/><path d="M1 8l2-2h12v5l-2 3H1z" fill="#4a4a4a"/><path d="M3 10h9M3 12h7" stroke="#eee"/>`))}
      ${btn("Open", icon(svg`<path d="M1 5h5l1 1h6v8H1z" fill="#6a6a1c"/><path d="M3 9h13l-3 5H1z" fill="#c9c83a" stroke="#333" stroke-width=".6"/><path d="M9 3q3-3 5 1" stroke="#333"/>`))}
      ${btn("Save", icon(svg`<path d="M1 1h14v14H1z" fill="#26261c"/><path d="M4 1.500h8v6H4z" fill="#b8b8a8"/><path d="M5 10h6v5H5z" fill="#ddd"/>`))}
      <span class="sep"></span>
      ${btn("Properties", icon(svg`<path d="M2 2h12v12H2z" fill="#c4c1b2" stroke="#a5a292"/><path d="M6 11 11 5M5 5h3" stroke="#fff" stroke-width="1.500"/>`))}
      <button class="text"><u>C</u>lose</button>
    </div>`;
  }

  private reportWindow() {
    return html`<xp-window class="w-report" active heading="Report Preview :">
      <div class="report">
        ${this.reportTools()}
        <div class="view">
          <div class="col">
            <div class="split">
              <div class="ruler"></div>
              <article class="page">
                <div class="phead"><span><em>مهندس محاسب:</em></span><span><em>شرکت:</em>رایان سازه۲</span><span><em>پروژه:</em>فولادي ۱</span><span><em>تاریخ:</em>۱۳۹۰/۸/۱۳</span></div>
                <div class="band">کنترل تنش خمشی سیستم صفحه ستون در راستای <b>X</b>(راست)</div>
                ${rows.map((r) => html`<div class=${classMap({ row: true, rule: !!r.rule, [r.cls]: true })}>
                  <span class="cell">${r.lens ? zoomSmall() : nothing}${r.formula}</span>
                  <span class="eq">${r.eq ? f(r.eq) : nothing}</span>
                  <span class="val">${r.value}</span>
                  <span class="note">${r.note ?? nothing}</span>
                </div>`)}
              </article>
              ${this.scroll("v", "g2", "g12", "g12")}
            </div>
            ${this.scroll("h", "", "g30", "g1")}
          </div>
        </div>
        <div class="rstatus"><span>0%</span><span class="p">Page 3 of 16</span><i class="grip"></i></div>
      </div>
    </xp-window>`;
  }

  render() {
    return html`${this.mainFrame()}${this.routeWindow()}${this.designWindow()}${this.reportWindow()}`;
  }
}
